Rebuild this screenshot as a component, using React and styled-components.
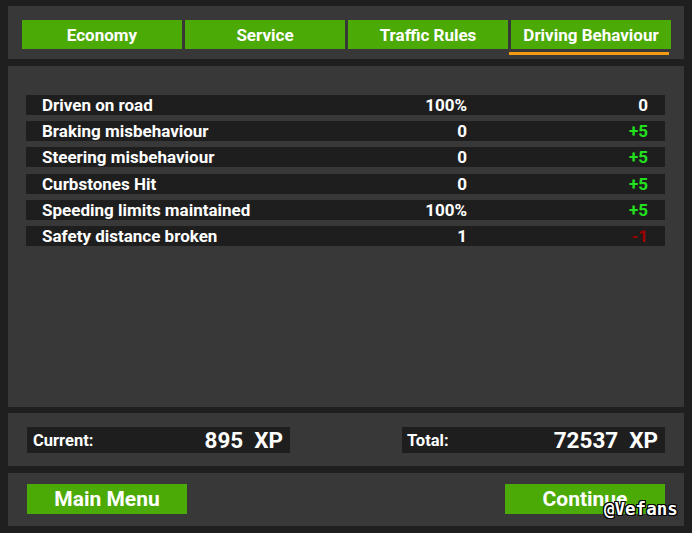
import React from "react";
import styled, { createGlobalStyle } from "styled-components";

const Global = createGlobalStyle`
  html, body { margin: 0; padding: 0; background: #1f1f1f; }
  body { font-family: Roboto, "Liberation Sans", sans-serif; }
`;

const Screen = styled.div`
  position: relative;
  width: 692px;
  height: 533px;
  box-sizing: border-box;
  padding: 6px 8px 7px 8px;
  display: flex;
  flex-direction: column;
  gap: 7px;
  background: #1f1f1f;
  overflow: hidden;
`;

const Panel = styled.div`
  background: #383838;
  box-sizing: border-box;
  height: ${(p) => p.$h}px;
  margin-top: ${(p) => p.$mt || 0}px;
  padding: ${(p) => p.$pad};
`;

const Tabs = styled.div`
  display: flex;
  gap: 3px;
`;

const TabWrap = styled.div`
  display: flex;
  flex-direction: column;
  gap: 3px;
`;

const Tab = styled.div`
  width: 160px;
  height: 29px;
  background: #4caa06;
  color: #fff;
  font-weight: 700;
  font-size: 17px;
  display: flex;
  align-items: center;
  justify-content: center;
`;

const Underline = styled.div`
  width: 160px;
  height: 3px;
  margin-left: -2px;
  background: ${(p) => (p.$on ? "#f29a12" : "transparent")};
`;

const Rows = styled.div`
  display: flex;
  flex-direction: column;
  gap: 6px;
`;

const Row = styled.div`
  display: grid;
  grid-template-columns: 1fr 100px 181px;
  height: 20px;
  align-items: center;
  background: #1e1e1e;
  padding: 0 17px 0 16px;
  margin-top: ${(p) => p.$mt || 0}px;
  color: #fff;
  font-weight: 700;
  font-size: 17px;
`;

const Right = styled.span`
  text-align: right;
  color: ${(p) => p.$color || "#fff"};
`;

const Stats = styled.div`
  display: flex;
  justify-content: space-between;
`;

const StatBox = styled.div`
  width: 263px;
  height: 26px;
  background: #1e1e1e;
  display: flex;
  align-items: center;
  justify-content: space-between;
  padding: 0 7px 0 ${(p) => p.$pl}px;
  box-sizing: border-box;
  color: #fff;
  font-weight: 700;
`;

const StatLabel = styled.span`
  font-size: 16.5px;
`;

const StatValue = styled.span`
  font-size: 22.5px;
  display: flex;
  gap: 11px;
`;

const Buttons = styled.div`
  display: flex;
  justify-content: space-between;
`;

const Button = styled.div`
  width: 160px;
  height: 30px;
  background: #4caa06;
  color: #fff;
  font-weight: 700;
  font-size: 21px;
  display: flex;
  align-items: center;
  justify-content: center;
`;

const Watermark = styled.div`
  position: absolute;
  left: 604px;
  top: 499px;
  font-family: "DejaVu Sans Mono", "Liberation Mono", monospace;
  font-size: 17.5px;
  font-weight: 700;
  color: #fff;
  text-shadow: 1px 0 #000, -1px 0 #000, 0 1px #000, 0 -1px #000, 1px 1px #000,
    -1px -1px #000, 1px -1px #000, -1px 1px #000;
`;

const tabs = ["Economy", "Service", "Traffic Rules", "Driving Behaviour"];

const rows = [
  { label: "Driven on road", value: "100%", pts: "0", color: "#fff" },
  { label: "Braking misbehaviour", value: "0", pts: "+5", color: "#22e01e" },
  { label: "Steering misbehaviour", value: "0", pts: "+5", color: "#22e01e" },
  { label: "Curbstones Hit", value: "0", pts: "+5", color: "#22e01e", mt: 1 },
  { label: "Speeding limits maintained", value: "100%", pts: "+5", color: "#22e01e" },
  { label: "Safety distance broken", value: "1", pts: "-1", color: "#a00000" },
];

export default function App() {
  return (
    <>
      <Global />
      <Screen>
        <Panel $h={53} $pad="14px 0 0 14px">
          <Tabs>
            {tabs.map((t, i) => (
              <TabWrap key={t}>
                <Tab>{t}</Tab>
                <Underline $on={i === 3} />
              </TabWrap>
            ))}
          </Tabs>
        </Panel>
        <Panel $h={341} $pad="29px 19px 0 18px">
          <Rows>
            {rows.map((r) => (
              <Row key={r.label} $mt={r.mt}>
                <span>{r.label}</span>
                <Right>{r.value}</Right>
                <Right $color={r.color}>{r.pts}</Right>
              </Row>
            ))}
          </Rows>
        </Panel>
        <Panel $h={53} $mt={-1} $pad="14px 19px 0 19px">
          <Stats>
            <StatBox $pl={6}>
              <StatLabel>Current:</StatLabel>
              <StatValue>
                <span>895</span>
                <span>XP</span>
              </StatValue>
            </StatBox>
            <StatBox $pl={5}>
              <StatLabel>Total:</StatLabel>
              <StatValue>
                <span>72537</span>
                <span>XP</span>
              </StatValue>
            </StatBox>
          </Stats>
        </Panel>
        <Panel $h={53} $pad="11px 19px 0 19px">
          <Buttons>
            <Button>Main Menu</Button>
            <Button>Continue</Button>
          </Buttons>
        </Panel>
        <Watermark>@Vefans</Watermark>
      </Screen>
    </>
  );
}
